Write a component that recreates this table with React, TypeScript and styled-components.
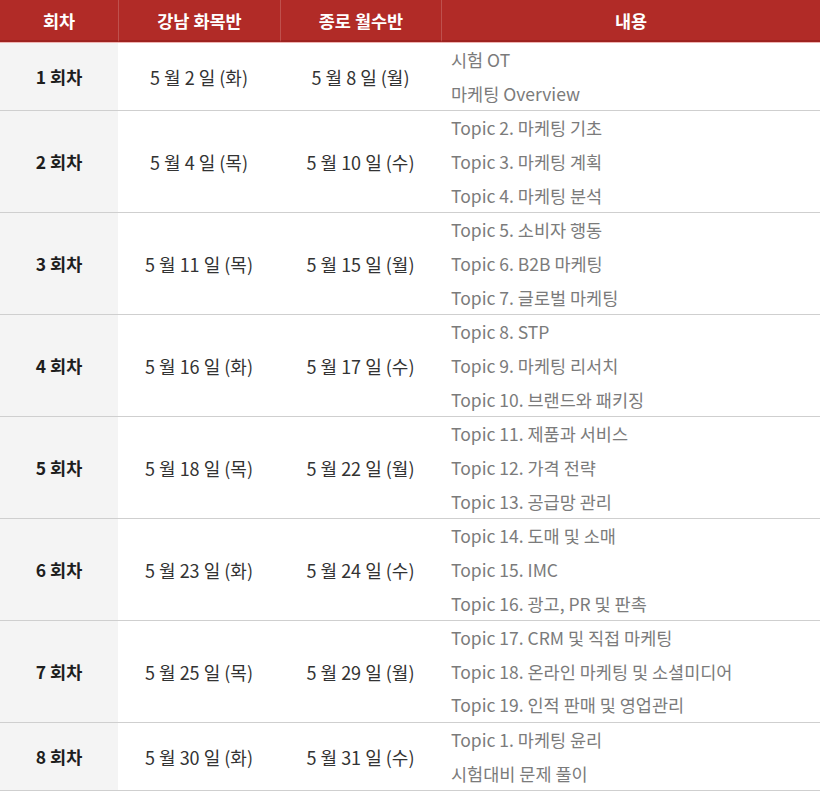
import React from 'react';
import styled, { createGlobalStyle } from 'styled-components';

const GlobalStyle = createGlobalStyle`
  body {
    margin: 0;
    background: #fff;
    font-family: "Noto Sans CJK KR", "Noto Sans", sans-serif;
  }
`;

const Table = styled.div`
  width: 820px;
  display: grid;
  grid-template-columns: 118px 162px 161px 1fr;
`;

const HeadCell = styled.div`
  height: 40px;
  display: flex;
  align-items: center;
  justify-content: center;
  background: #b12b27;
  color: #fff;
  font-size: 17.5px;
  font-weight: 700;
  border-bottom: 2px solid #9e2320;
  box-shadow: 0 1px 0 #efb4b2;
  margin-bottom: 1px;

  & + & {
    border-left: 1px solid rgba(255, 255, 255, 0.18);
  }
`;

const Cell = styled.div<{ $shade?: boolean; $bold?: boolean }>`
  display: flex;
  align-items: center;
  justify-content: center;
  font-size: ${({ $bold }) => ($bold ? '17.5px' : '18px')};
  color: ${({ $bold }) => ($bold ? '#1e1e1e' : '#333')};
  font-weight: ${({ $bold }) => ($bold ? 700 : 400)};
  background: ${({ $shade }) => ($shade ? '#f4f4f4' : '#fff')};
  border-bottom: 1px solid #cfcfcf;
`;

const Topics = styled.div`
  display: flex;
  flex-direction: column;
  padding-left: 10px;
  border-bottom: 1px solid #cfcfcf;
`;

const Topic = styled.div`
  height: 33.67px;
  line-height: 33.67px;
  font-size: 17.5px;
  color: #7b7b7b;
  white-space: nowrap;
`;

type Session = {
  no: number;
  gangnam: string;
  jongno: string;
  topics: string[];
};

const sessions: Session[] = [
  { no: 1, gangnam: '5 월 2 일 (화)', jongno: '5 월 8 일 (월)', topics: ['시험 OT', '마케팅 Overview'] },
  { no: 2, gangnam: '5 월 4 일 (목)', jongno: '5 월 10 일 (수)', topics: ['Topic 2. 마케팅 기초', 'Topic 3. 마케팅 계획', 'Topic 4. 마케팅 분석'] },
  { no: 3, gangnam: '5 월 11 일 (목)', jongno: '5 월 15 일 (월)', topics: ['Topic 5. 소비자 행동', 'Topic 6. B2B 마케팅', 'Topic 7. 글로벌 마케팅'] },
  { no: 4, gangnam: '5 월 16 일 (화)', jongno: '5 월 17 일 (수)', topics: ['Topic 8. STP', 'Topic 9. 마케팅 리서치', 'Topic 10. 브랜드와 패키징'] },
  { no: 5, gangnam: '5 월 18 일 (목)', jongno: '5 월 22 일 (월)', topics: ['Topic 11. 제품과 서비스', 'Topic 12. 가격 전략', 'Topic 13. 공급망 관리'] },
  { no: 6, gangnam: '5 월 23 일 (화)', jongno: '5 월 24 일 (수)', topics: ['Topic 14. 도매 및 소매', 'Topic 15. IMC', 'Topic 16. 광고, PR 및 판촉'] },
  { no: 7, gangnam: '5 월 25 일 (목)', jongno: '5 월 29 일 (월)', topics: ['Topic 17. CRM 및 직접 마케팅', 'Topic 18. 온라인 마케팅 및 소셜미디어', 'Topic 19. 인적 판매 및 영업관리'] },
  { no: 8, gangnam: '5 월 30 일 (화)', jongno: '5 월 31 일 (수)', topics: ['Topic 1. 마케팅 윤리', '시험대비 문제 풀이'] },
];

const App = () => {
  return (
    <>
      <GlobalStyle />
      <Table>
        <HeadCell>회차</HeadCell>
        <HeadCell>강남 화목반</HeadCell>
        <HeadCell>종로 월수반</HeadCell>
        <HeadCell>내용</HeadCell>
        {sessions.map((s) => (
          <React.Fragment key={s.no}>
            <Cell $shade $bold>{s.no} 회차</Cell>
            <Cell>{s.gangnam}</Cell>
            <Cell>{s.jongno}</Cell>
            <Topics>
              {s.topics.map((t) => (
                <Topic key={t}>{t}</Topic>
              ))}
            </Topics>
          </React.Fragment>
        ))}
      </Table>
    </>
  );
};

export default App;
